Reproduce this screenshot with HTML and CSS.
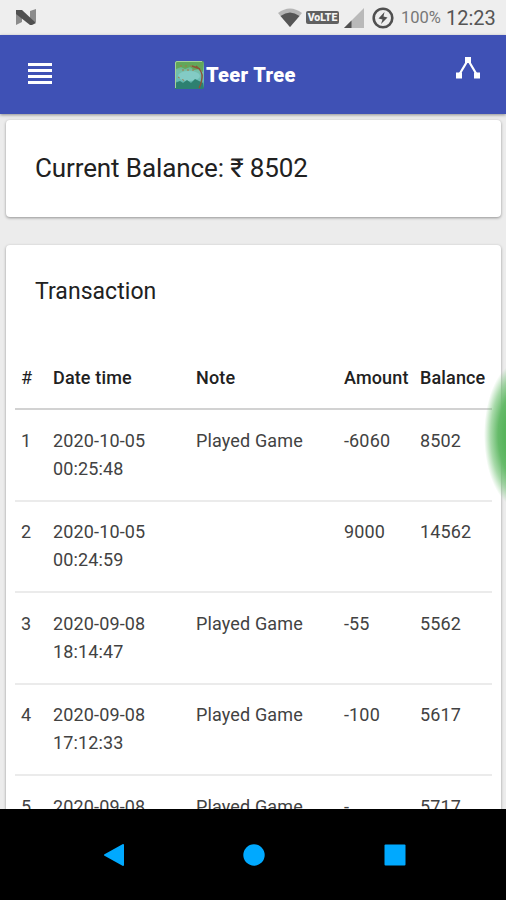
FILE: index.html
```
<!DOCTYPE html>
<html lang="en">
<head>
<meta charset="utf-8">
<title>Teer Tree</title>
<link rel="stylesheet" href="styles.css">
</head>
<body>
<div class="screen">
  <div class="status">
    <svg class="n-logo" width="20" height="17" viewBox="0 0 20 17"><path fill="#8b8b8b" d="M0 1l6 2v10l-6 3zM14 2l6-2v13l-6 2z"/><path fill="#505050" d="M0 1h6l14 13-4 2h-2L0 5z"/></svg>
    <svg class="wifi" width="24" height="19" viewBox="0 0 24 19"><path fill="#b5b5b5" d="M0 5Q12-4 24 5L12 19z"/><path fill="#555" d="M2.500 8Q12 1 21.500 8L12 19z"/></svg>
    <span class="volte">VoLTE</span>
    <svg class="signal" width="20" height="20" viewBox="0 0 20 20"><path fill="#b9b9b9" d="M20 0v20H0z"/><path fill="#505050" d="M7.500 12.500V20H0z"/></svg>
    <svg class="battery" width="22" height="22" viewBox="0 0 22 22"><circle cx="11" cy="11" r="9.300" fill="none" stroke="#505050" stroke-width="2.600"/><path fill="#505050" d="M12.500 5L6.500 11.500l4 1L9 17l6.500-6.500-4-1z"/></svg>
    <span class="percent">100%</span>
    <span class="clock">12:23</span>
  </div>
  <header class="appbar">
    <svg class="menu" width="24" height="21" viewBox="0 0 24 21"><path fill="#fff" d="M0 0h24v3H0zM0 6h24v3H0zM0 12h24v3H0zM0 18h24v3H0z"/></svg>
    <div class="brand">
      <svg width="29" height="28" viewBox="0 0 29 28">
        <defs><linearGradient id="sky" x1="0" y1="0" x2="0" y2="1"><stop offset="0" stop-color="#5aa657"/><stop offset=".35" stop-color="#76bfa9"/><stop offset=".7" stop-color="#6abcb5"/><stop offset="1" stop-color="#287c62"/></linearGradient></defs>
        <rect width="29" height="28" rx="2" fill="url(#sky)"/>
        <path fill="#62a65a" d="M1 1h27v10l-4-3-5 1-4-3-5 2-4-2-5 2z"/>
        <ellipse cx="14" cy="15" rx="11" ry="5" fill="#83cbc5"/>
        <path fill="#2d8070" d="M0 22l5-2 3 2 4-3 4 3 4-4 8 4v6H0z"/>
        <path fill="none" stroke="#8d5436" stroke-width="1.500" d="M21 5q7 5 6 12t-3 10M25 8l-8-3"/>
        <path fill="none" stroke="#a37745" stroke-dasharray="2 3" d="M5 5h15M7 9h12M3 16l7 4"/>
        <path fill="none" stroke="#a6d196" d="M.5 27V2Q.5.5 2 .5h25"/>
      </svg>
      <span>Teer Tree</span>
    </div>
    <svg class="share" width="24" height="22" viewBox="0 0 24 22"><path fill="none" stroke="#fff" stroke-width="2.200" d="M3 18L12 3l9 15"/><path fill="#fff" d="M9 0h6v6H9zM0 15.500h6v6H0zM18 15.500h6v6h-6z"/></svg>
  </header>
  <main class="content">
    <section class="card balance"><h1>Current Balance: ₹ 8502</h1></section>
    <section class="card history">
      <h2>Transaction</h2>
      <table>
        <colgroup><col class="c-id"><col class="c-date"><col class="c-note"><col class="c-amount"><col class="c-balance"></colgroup>
        <thead><tr><th>#</th><th>Date time</th><th>Note</th><th>Amount</th><th>Balance</th></tr></thead>
        <tbody>
          <tr><td>1</td><td>2020-10-05<br>00:25:48</td><td>Played Game</td><td>-6060</td><td>8502</td></tr>
          <tr><td>2</td><td>2020-10-05<br>00:24:59</td><td></td><td>9000</td><td>14562</td></tr>
          <tr><td>3</td><td>2020-09-08<br>18:14:47</td><td>Played Game</td><td>-55</td><td>5562</td></tr>
          <tr><td>4</td><td>2020-09-08<br>17:12:33</td><td>Played Game</td><td>-100</td><td>5617</td></tr>
          <tr><td>5</td><td>2020-09-08</td><td>Played Game</td><td>-</td><td>5717</td></tr>
        </tbody>
      </table>
    </section>
  </main>
  <nav class="navbar">
    <svg width="20" height="22" viewBox="0 0 20 22"><path fill="#00a9ff" stroke="#00a9ff" stroke-width="2" stroke-linejoin="round" d="M1 11L19 1v20z"/></svg>
    <svg width="22" height="22" viewBox="0 0 22 22"><circle cx="11" cy="11" r="10.700" fill="#00a9ff"/></svg>
    <svg width="22" height="22" viewBox="0 0 22 22"><rect x=".5" y=".5" width="21" height="21" rx="1" fill="#00a9ff"/></svg>
  </nav>
  <div class="edge-glow"></div>
</div>
</body>
</html>
```
FILE: styles.css
```
* { box-sizing: border-box; }
body { margin: 0; font-family: Roboto, "Liberation Sans", sans-serif; color: #212121; }
svg { display: block; flex: none; }
.screen { position: relative; width: 506px; height: 900px; overflow: hidden; display: flex; flex-direction: column; background: #ececec; }
.status { flex: none; height: 35px; display: flex; align-items: center; padding: 0 11px 0 16px; background: #eee; color: #555; }
.n-logo { margin-right: auto; }
.wifi { margin-right: 4px; }
.volte { width: 33px; height: 13px; margin-right: 5px; border-radius: 2px; background: #606060; color: #f4f4f4; font-size: 10.5px; font-weight: 900; line-height: 13px; text-align: center; }
.signal { margin-right: 8px; }
.battery { margin-right: 7px; }
.percent { width: 45px; font-size: 16.5px; color: #777; white-space: nowrap; }
.clock { width: 49px; font-size: 20px; white-space: nowrap; }
.appbar { flex: none; height: 79px; display: flex; align-items: center; padding: 0 26px 0 28px; background: #3f51b5; box-shadow: 0 1px 3px rgba(0,0,0,.4); z-index: 1; }
.menu { margin-bottom: 2px; }
.brand { display: flex; align-items: center; gap: 2px; margin-left: 123px; color: #fff; font-size: 20px; font-weight: 900; letter-spacing: .35px; }
.brand span { white-space: nowrap; }
.share { margin: 0 0 13px auto; }
.content { flex: 1; min-height: 0; overflow: hidden; padding: 6px 5px 0 6px; }
.card { background: #fff; border-radius: 4px; box-shadow: 0 1px 3px rgba(0,0,0,.38); }
.balance { height: 97px; padding: 30px 29px; margin-bottom: 28px; }
h1, h2 { margin: 0; font-weight: 400; white-space: nowrap; }
h1 { font-size: 26px; line-height: 36px; letter-spacing: -.11px; }
.history { padding: 30px 9px 0; height: 640px; }
h2 { padding-left: 20px; font-size: 23px; line-height: 34px; letter-spacing: .05px; }
table { width: 477px; margin-top: 37px; table-layout: fixed; border-collapse: separate; border-spacing: 0; font-size: 18px; line-height: 28px; letter-spacing: .14px; text-align: left; }
.c-id { width: 32px; }
.c-date { width: 143px; }
.c-note { width: 148px; }
.c-amount { width: 76px; }
.c-balance { width: 78px; }
th, td { padding: 0 0 0 6px; vertical-align: top; white-space: nowrap; }
th { height: 64px; padding-top: 18px; border-bottom: 2px solid #d2d2d2; font-weight: 500; }
th:first-child { font-weight: 400; }
td { height: 91.5px; padding-top: 16.5px; border-bottom: 2px solid #ebebeb; color: #424242; }
.navbar { flex: none; height: 91px; display: flex; justify-content: center; gap: 119px; padding: 35px 0 0 3px; background: #000; z-index: 1; }
.edge-glow { position: absolute; left: 484px; top: 361px; width: 74px; height: 148px; border-radius: 50%; background: radial-gradient(closest-side, #58b45c 45%, #66bb6a 62%, rgba(110,193,113,.6) 82%, rgba(130,205,133,0) 100%); z-index: 2; }
```
